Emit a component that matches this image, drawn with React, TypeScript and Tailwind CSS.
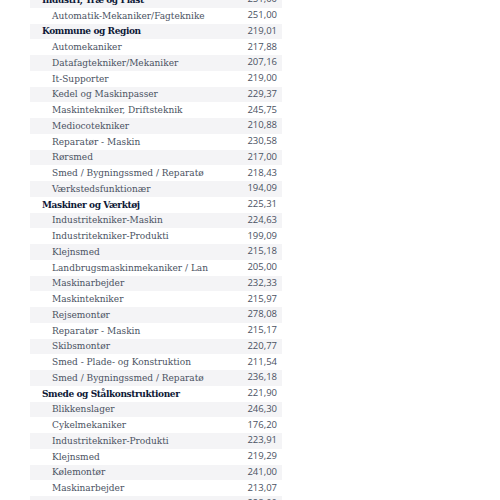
type Row = { name: string; value: string; group?: boolean }

const rows: Row[] = [
  { name: 'Industri, Træ og Plast', value: '251,00', group: true },
  { name: 'Automatik-Mekaniker/Fagteknike', value: '251,00' },
  { name: 'Kommune og Region', value: '219,01', group: true },
  { name: 'Automekaniker', value: '217,88' },
  { name: 'Datafagtekniker/Mekaniker', value: '207,16' },
  { name: 'It-Supporter', value: '219,00' },
  { name: 'Kedel og Maskinpasser', value: '229,37' },
  { name: 'Maskintekniker, Driftsteknik', value: '245,75' },
  { name: 'Mediocotekniker', value: '210,88' },
  { name: 'Reparatør - Maskin', value: '230,58' },
  { name: 'Rørsmed', value: '217,00' },
  { name: 'Smed / Bygningssmed / Reparatø', value: '218,43' },
  { name: 'Værkstedsfunktionær', value: '194,09' },
  { name: 'Maskiner og Værktøj', value: '225,31', group: true },
  { name: 'Industritekniker-Maskin', value: '224,63' },
  { name: 'Industritekniker-Produkti', value: '199,09' },
  { name: 'Klejnsmed', value: '215,18' },
  { name: 'Landbrugsmaskinmekaniker / Lan', value: '205,00' },
  { name: 'Maskinarbejder', value: '232,33' },
  { name: 'Maskintekniker', value: '215,97' },
  { name: 'Rejsemontør', value: '278,08' },
  { name: 'Reparatør - Maskin', value: '215,17' },
  { name: 'Skibsmontør', value: '220,77' },
  { name: 'Smed - Plade- og Konstruktion', value: '211,54' },
  { name: 'Smed / Bygningssmed / Reparatø', value: '236,18' },
  { name: 'Smede og Stålkonstruktioner', value: '221,90', group: true },
  { name: 'Blikkenslager', value: '246,30' },
  { name: 'Cykelmekaniker', value: '176,20' },
  { name: 'Industritekniker-Produkti', value: '223,91' },
  { name: 'Klejnsmed', value: '219,29' },
  { name: 'Kølemontør', value: '241,00' },
  { name: 'Maskinarbejder', value: '213,07' },
  { name: 'Montør', value: '228,00' },
]

export default function App() {
  return (
    <div className="h-[500px] w-[500px] overflow-hidden bg-white">
      <div className="ml-[30px] mt-[-8px] w-[252px]">
        {rows.map((row, i) => (
          <div
            key={i}
            className={`flex h-[15.76px] items-center justify-between pr-[5px] pb-[1px] ${i % 2 === 0 ? 'bg-[#f4f4f6]' : 'bg-white'}`}
          >
            {row.group ? (
              <span className="pl-[12px] font-['DejaVu_Serif_Condensed','DejaVu_Serif',serif] text-[10px] font-bold tracking-[-0.04em] text-[#0d1836]">
                {row.name}
              </span>
            ) : (
              <span className="pl-[22px] font-['DejaVu_Serif_Condensed','DejaVu_Serif',serif] text-[10px] text-[#4a5262]">
                {row.name}
              </span>
            )}
            <span className="font-['Open_Sans',sans-serif] text-[9.5px] text-[#4a5262]">{row.value}</span>
          </div>
        ))}
      </div>
    </div>
  )
}
